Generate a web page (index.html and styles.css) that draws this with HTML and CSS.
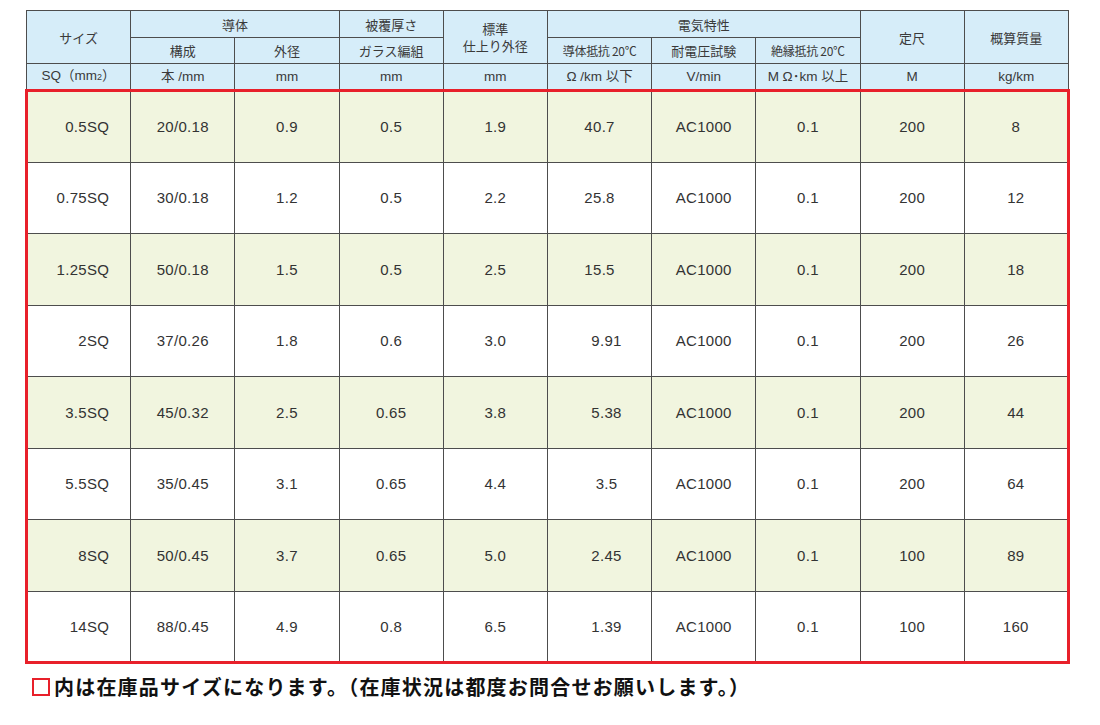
FILE: index.html
```html
<!DOCTYPE html>
<html lang="ja">
<head>
<meta charset="utf-8">
<title>仕様表</title>
<link rel="stylesheet" href="styles.css">
</head>
<body>
<table class="spec">
  <colgroup>
    <col><col><col><col><col><col><col><col><col><col>
  </colgroup>
  <thead>
    <tr class="h1">
      <th rowspan="2">サイズ</th>
      <th colspan="2">導体</th>
      <th>被覆厚さ</th>
      <th rowspan="2" class="two">標準<br>仕上り外径</th>
      <th colspan="3">電気特性</th>
      <th rowspan="2">定尺</th>
      <th rowspan="2">概算質量</th>
    </tr>
    <tr class="h2">
      <th>構成</th>
      <th>外径</th>
      <th>ガラス編組</th>
      <th class="sm">導体抵抗 20℃</th>
      <th>耐電圧試験</th>
      <th class="sm">絶縁抵抗 20℃</th>
    </tr>
    <tr class="h3">
      <th>SQ（mm<span class="sub">2</span>）</th>
      <th>本 /mm</th>
      <th>mm</th>
      <th>mm</th>
      <th>mm</th>
      <th>Ω /km 以下</th>
      <th>V/min</th>
      <th>M Ω･km 以上</th>
      <th>M</th>
      <th>kg/km</th>
    </tr>
  </thead>
  <tbody>
    <tr class="g"><td class="size">0.5SQ</td><td>20/0.18</td><td>0.9</td><td>0.5</td><td>1.9</td><td>40.7</td><td>AC1000</td><td>0.1</td><td>200</td><td>8</td></tr>
    <tr><td class="size">0.75SQ</td><td>30/0.18</td><td>1.2</td><td>0.5</td><td>2.2</td><td>25.8</td><td>AC1000</td><td>0.1</td><td>200</td><td>12</td></tr>
    <tr class="g"><td class="size">1.25SQ</td><td>50/0.18</td><td>1.5</td><td>0.5</td><td>2.5</td><td>15.5</td><td>AC1000</td><td>0.1</td><td>200</td><td>18</td></tr>
    <tr><td class="size">2SQ</td><td>37/0.26</td><td>1.8</td><td>0.6</td><td>3.0</td><td class="r">9.91</td><td>AC1000</td><td>0.1</td><td>200</td><td>26</td></tr>
    <tr class="g"><td class="size">3.5SQ</td><td>45/0.32</td><td>2.5</td><td>0.65</td><td>3.8</td><td class="r">5.38</td><td>AC1000</td><td>0.1</td><td>200</td><td>44</td></tr>
    <tr><td class="size">5.5SQ</td><td>35/0.45</td><td>3.1</td><td>0.65</td><td>4.4</td><td class="r">3.5</td><td>AC1000</td><td>0.1</td><td>200</td><td>64</td></tr>
    <tr class="g"><td class="size">8SQ</td><td>50/0.45</td><td>3.7</td><td>0.65</td><td>5.0</td><td class="r">2.45</td><td>AC1000</td><td>0.1</td><td>100</td><td>89</td></tr>
    <tr><td class="size">14SQ</td><td>88/0.45</td><td>4.9</td><td>0.8</td><td>6.5</td><td class="r">1.39</td><td>AC1000</td><td>0.1</td><td>100</td><td>160</td></tr>
  </tbody>
</table>
<p class="note"><span class="box"></span>内は在庫品サイズになります。（在庫状況は都度お問合せお願いします。）</p>
</body>
</html>
```
FILE: styles.css
```css
html, body {
  margin: 0;
  background: #ffffff;
}
body {
  padding: 10px 0 0 25px;
  font-family: "Liberation Sans", "Noto Sans CJK JP", sans-serif;
}
.spec {
  width: 1042px;
  table-layout: fixed;
  border-collapse: collapse;
  color: #333333;
}
.spec col {
  width: 104.2px;
}
.spec th,
.spec td {
  border: 1px solid #4d4d4d;
  padding: 0;
  text-align: center;
  vertical-align: middle;
}
.spec th {
  background: #d6edf9;
  font-family: "Noto Sans CJK JP", "Liberation Sans", sans-serif;
  font-weight: normal;
  font-size: 13px;
  color: #3a3a3a;
  line-height: 17px;
}
.spec th.sm {
  font-size: 12px;
  letter-spacing: -0.3px;
}
.spec .h1 {
  height: 27px;
}
.spec .h2 {
  height: 26px;
}
.spec .h3 {
  height: 27px;
}
.spec .h3 th {
  font-family: "Liberation Sans", "Noto Sans CJK JP", sans-serif;
  font-size: 13.5px;
}
.spec .sub {
  font-size: 9px;
}
.spec tbody {
  border: 3px solid #e8202a;
}
.spec tbody tr {
  height: 71.5px;
}
.spec tbody tr.g td {
  background: #f1f5df;
}
.spec td {
  font-size: 15px;
  letter-spacing: 0.3px;
  color: #333333;
}
.spec td.size {
  text-align: right;
  padding-right: 21px;
}
.spec td.r {
  padding-left: 14px;
}
.note {
  margin: 10px 0 0 7px;
  font-family: "Noto Sans CJK JP", sans-serif;
  font-weight: bold;
  font-size: 20px;
  line-height: 26px;
  letter-spacing: 1.2px;
  color: #111111;
  display: flex;
  align-items: center;
}
.box {
  display: inline-block;
  width: 14px;
  height: 14px;
  border: 2px solid #e8202a;
  margin-right: 4px;
}
```
